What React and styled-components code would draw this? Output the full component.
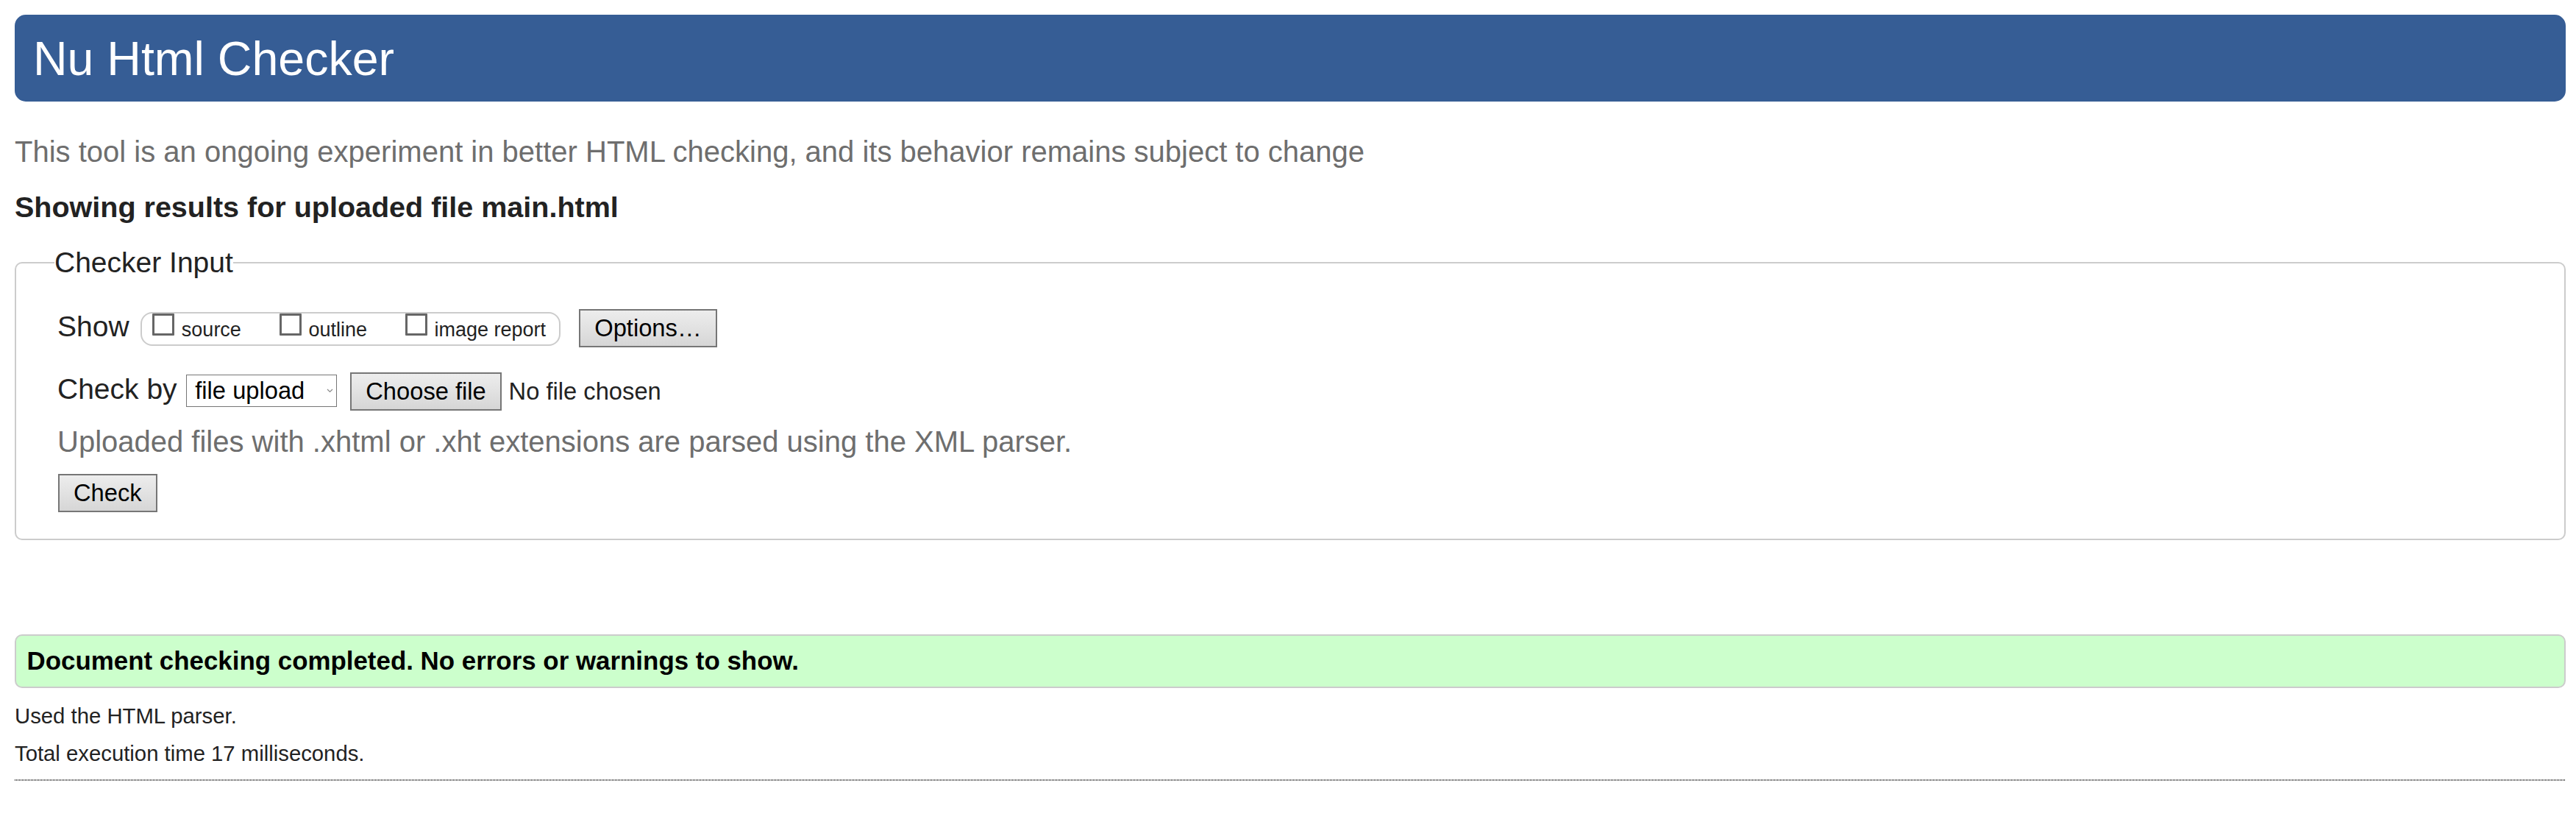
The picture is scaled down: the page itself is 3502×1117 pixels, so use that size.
import React from 'react';
import styled, { createGlobalStyle } from 'styled-components';

const GlobalStyle = createGlobalStyle`
  *, *::before, *::after {
    box-sizing: border-box;
  }
  html, body {
    margin: 0;
    background: #fff;
  }
  body {
    font-family: "Liberation Sans", Arial, sans-serif;
    color: #222;
  }
`;

const Page = styled.div`
  padding: 20px 14px 0 20px;
`;

const Title = styled.h1`
  margin: 0;
  height: 118px;
  padding: 3px 0 0 25px;
  background: #365d95;
  color: #fff;
  border-radius: 15px;
  font-size: 64.5px;
  font-weight: normal;
  line-height: 115px;
`;

const Intro = styled.p`
  margin: 44.1px 0 0;
  font-size: 40px;
  line-height: 48px;
  color: #6e6e6e;
`;

const ResultsFor = styled.h2`
  margin: 28.2px 0 0;
  font-size: 39.5px;
  font-weight: bold;
  line-height: 46px;
  color: #222;
`;

const Fieldset = styled.fieldset`
  margin: 30.2px 0 0;
  min-inline-size: 0;
  padding: 39.5px 20px 36.7px 56px;
  border: 2px solid #cccccc;
  border-radius: 10px;
`;

const Legend = styled.legend`
  margin-left: -4px;
  padding: 0;
  font-size: 39px;
  line-height: 46px;
  color: #222;
`;

const Row = styled.div`
  display: flex;
  align-items: flex-start;
  height: 52px;
  margin-top: ${(p) => p.$gap || 0}px;
`;

const FieldLabel = styled.span`
  font-size: 39px;
  line-height: 46px;
  margin-top: ${(p) => p.$top || 0}px;
  margin-right: ${(p) => p.$right || 0}px;
  color: #222;
  white-space: nowrap;
`;

const OptionGroup = styled.span`
  display: flex;
  align-items: flex-start;
  gap: 52px;
  height: 46px;
  margin-top: 4px;
  padding: 0 17.6px 0 14.6px;
  border: 2px solid #cccccc;
  border-radius: 16px;
`;

const OptionItem = styled.label`
  display: flex;
  align-items: flex-start;
  gap: 9.5px;
`;

const Checkbox = styled.input.attrs({ type: 'checkbox' })`
  appearance: none;
  margin: 0;
  width: 30px;
  height: 30px;
  border: 3px solid #666;
  border-radius: 1px;
  background: #fff;
`;

const OptionText = styled.span`
  margin-top: 6px;
  font-size: 27px;
  line-height: 32px;
  color: #222;
  white-space: nowrap;
`;

const Button = styled.button`
  height: 52px;
  margin: 0 0 0 ${(p) => p.$left || 0}px;
  padding: 0 19px;
  border: 2px solid #767676;
  border-radius: 0;
  background: linear-gradient(#ededed, #d6d6d6);
  font-family: "Liberation Sans", Arial, sans-serif;
  font-size: 32.7px;
  line-height: 48px;
  color: #000;
  white-space: nowrap;
`;

const SelectWrap = styled.span`
  position: relative;
  display: block;
  width: 205px;
  height: 44px;
  margin-top: 3.6px;
`;

const Select = styled.select`
  appearance: none;
  display: block;
  width: 100%;
  height: 100%;
  margin: 0;
  padding: 0 0 0 11px;
  border: 1px solid #767676;
  border-radius: 0;
  background: #fff;
  font-family: "Liberation Sans", Arial, sans-serif;
  font-size: 32.7px;
  line-height: 42px;
  color: #000;
`;

const Chevron = styled.svg`
  position: absolute;
  right: 5px;
  top: 50%;
  margin-top: -3px;
  pointer-events: none;
`;

const FileStatus = styled.span`
  margin-left: 9.8px;
  font-size: 32.7px;
  line-height: 52px;
  color: #222;
  white-space: nowrap;
`;

const Hint = styled.p`
  margin: 18.8px 0 0;
  font-size: 40px;
  line-height: 48px;
  color: #6e6e6e;
`;

const SubmitRow = styled.div`
  margin-top: 19.2px;
`;

const Success = styled.p`
  margin: 127.7px 0 0;
  padding: 14.2px 14.5px 14.4px;
  border: 2px solid #cccccc;
  border-radius: 10px;
  background: #ccffcc;
  font-size: 34.9px;
  font-weight: bold;
  line-height: 40px;
  color: #000;
`;

const Stat = styled.p`
  margin: ${(p) => p.$gap}px 0 0;
  font-size: 29.3px;
  line-height: 35px;
  color: #222;
`;

const DottedRule = styled.div`
  height: 2px;
  margin-top: 18.3px;
  background: repeating-linear-gradient(90deg, #444 0 1px, transparent 1px 2px);
`;

export default function App() {
  return (
    <>
      <GlobalStyle />
      <Page>
        <Title>Nu Html Checker</Title>
        <Intro>
          This tool is an ongoing experiment in better HTML checking, and its behavior remains
          subject to change
        </Intro>
        <ResultsFor>Showing results for uploaded file main.html</ResultsFor>

        <Fieldset>
          <Legend>Checker Input</Legend>
          <Row>
            <FieldLabel $top={1} $right={15.2}>
              Show
            </FieldLabel>
            <OptionGroup>
              <OptionItem>
                <Checkbox />
                <OptionText>source</OptionText>
              </OptionItem>
              <OptionItem>
                <Checkbox />
                <OptionText>outline</OptionText>
              </OptionItem>
              <OptionItem>
                <Checkbox />
                <OptionText>image report</OptionText>
              </OptionItem>
            </OptionGroup>
            <Button $left={25.6}>Options…</Button>
          </Row>
          <Row $gap={33.7}>
            <FieldLabel $right={12.7}>Check by</FieldLabel>
            <SelectWrap>
              <Select defaultValue="upload">
                <option value="address">address</option>
                <option value="upload">file upload</option>
                <option value="textarea">text input</option>
              </Select>
              <Chevron width="9" height="6" viewBox="0 0 9 6">
                <path d="M1 1 L4.5 4.5 L8 1" fill="none" stroke="#8a8a8a" strokeWidth="1.2" />
              </Chevron>
            </SelectWrap>
            <Button $left={18}>Choose file</Button>
            <FileStatus>No file chosen</FileStatus>
          </Row>
          <Hint>Uploaded files with .xhtml or .xht extensions are parsed using the XML parser.</Hint>
          <SubmitRow>
            <Button $left={1}>Check</Button>
          </SubmitRow>
        </Fieldset>

        <Success>Document checking completed. No errors or warnings to show.</Success>
        <Stat $gap={20.1}>Used the HTML parser.</Stat>
        <Stat $gap={16.3}>Total execution time 17 milliseconds.</Stat>
        <DottedRule />
      </Page>
    </>
  );
}
